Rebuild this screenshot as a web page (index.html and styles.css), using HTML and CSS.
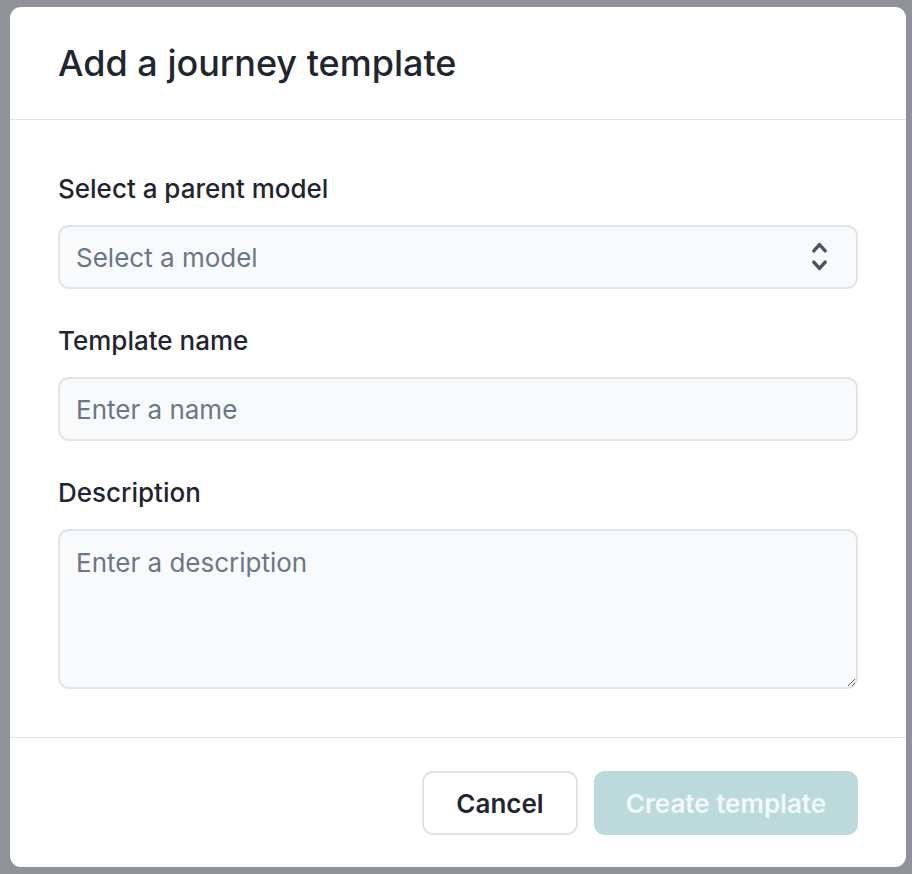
FILE: index.html
```html
<!DOCTYPE html>
<html lang="en">
<head>
<meta charset="utf-8">
<title>Add a journey template</title>
<link rel="stylesheet" href="styles.css">
</head>
<body>
<div class="modal">
  <header class="modal-header">
    <h1 class="modal-title">Add a journey template</h1>
  </header>
  <form class="modal-body">
    <div class="field">
      <label class="label" for="model">Select a parent model</label>
      <div class="select-wrap">
        <select id="model" class="control select">
          <option value="">Select a model</option>
        </select>
        <svg class="chevrons" viewBox="0 0 16 30" aria-hidden="true">
          <path d="M2.5 9.5 L8 3.5 L13.5 9.5" />
          <path d="M2.5 20.5 L8 26.5 L13.5 20.5" />
        </svg>
      </div>
    </div>
    <div class="field">
      <label class="label" for="name">Template name</label>
      <input id="name" class="control" type="text" placeholder="Enter a name">
    </div>
    <div class="field">
      <label class="label" for="desc">Description</label>
      <textarea id="desc" class="control textarea" placeholder="Enter a description"></textarea>
    </div>
  </form>
  <footer class="modal-footer">
    <button class="btn btn-secondary" type="button">Cancel</button>
    <button class="btn btn-primary" type="button" disabled>Create template</button>
  </footer>
</div>
</body>
</html>
```

FILE: styles.css
```css
* { box-sizing: border-box; }

html, body {
  margin: 0;
  height: 100%;
}

body {
  background: #8f9297;
  font-family: Inter, "Noto Sans", "Liberation Sans", sans-serif;
  color: #1f2630;
  padding: 7px 6px 0 10px;
}

.modal {
  width: 896px;
  height: 860px;
  background: #ffffff;
  border-radius: 11px;
  display: flex;
  flex-direction: column;
  overflow: hidden;
}

.modal-header {
  height: 113px;
  border-bottom: 1px solid #dfe3e8;
  padding: 0 48px;
  display: flex;
  align-items: center;
}

.modal-title {
  margin: 0;
  font-size: 36px;
  line-height: 48px;
  font-weight: 500;
  color: #1f2630;
  letter-spacing: 0;
}

.modal-body {
  margin: 0;
  padding: 47px 48px 48px;
  display: flex;
  flex-direction: column;
  gap: 30px;
  border-bottom: 1px solid #dfe3e8;
}

.field {
  display: flex;
  flex-direction: column;
}

.label {
  font-size: 26px;
  line-height: 40px;
  font-weight: 500;
  color: #1f2630;
  padding-top: 2px;
  margin-bottom: 16px;
}

.control {
  width: 100%;
  height: 64px;
  background: #f8fafc;
  border: 2px solid #e1e5eb;
  border-radius: 11px;
  padding: 0 16px;
  font-family: inherit;
  font-size: 26px;
  color: #1f2630;
  outline: none;
}

.control::placeholder {
  color: #6b7686;
  opacity: 1;
}

.select-wrap {
  position: relative;
}

.select {
  appearance: none;
  -webkit-appearance: none;
  color: #6b7686;
}

.chevrons {
  position: absolute;
  right: 30px;
  top: 16px;
  width: 17px;
  height: 31px;
  fill: none;
  stroke: #4b5563;
  stroke-width: 3.4;
  stroke-linecap: round;
  stroke-linejoin: round;
  pointer-events: none;
}

.textarea {
  height: 160px;
  padding: 14px 16px;
  line-height: 36px;
  resize: vertical;
  display: block;
}

.modal-footer {
  flex: 1;
  display: flex;
  justify-content: flex-end;
  align-items: flex-start;
  gap: 16px;
  padding: 33px 48px 0;
}

.btn {
  height: 64px;
  border-radius: 11px;
  font-family: inherit;
  font-size: 26px;
  font-weight: 600;
  padding: 0;
  white-space: nowrap;
  cursor: pointer;
}

.btn-secondary {
  width: 156px;
  background: #ffffff;
  border: 2px solid #dfe2e9;
  color: #1f2630;
}

.btn-primary {
  width: 264px;
  background: #bcdadb;
  border: none;
  color: #f3f9f9;
}
```
